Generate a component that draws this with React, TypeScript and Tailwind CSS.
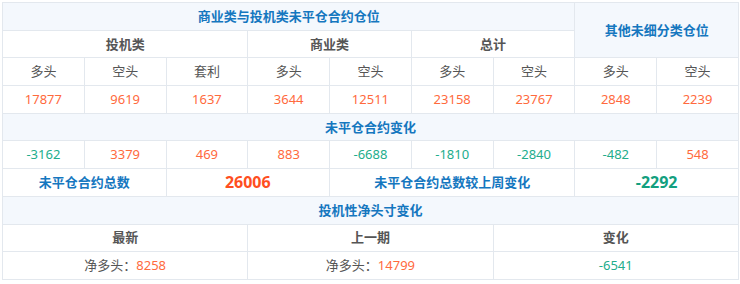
import React from "react";

const B = "border border-[#e3e8ee]";
const head = `${B} bg-[#f4f8fd] text-[#1577bf] font-bold text-[13px]`;
const sub = `${B} text-[#555] font-bold text-[13px]`;
const lab = `${B} text-[#555] text-[13px]`;
const org = `${B} text-[#ff6a3d] text-[13px]`;
const grn = `${B} text-[#22ad8c] text-[13px]`;

export default function App() {
  const cols = Array.from({ length: 9 });
  return (
    <div className="p-[2px] bg-white" style={{ fontFamily: '"Noto Sans", "Noto Sans CJK SC", sans-serif' }}>
      <table className="table-fixed border-collapse w-[736px] text-center leading-none">
        <colgroup>
          {cols.map((_, i) => (
            <col key={i} className="w-[81.78px]" />
          ))}
        </colgroup>
        <tbody>
          <tr className="h-[27.7px]">
            <td colSpan={7} className={head}>商业类与投机类未平仓合约仓位</td>
            <td colSpan={2} rowSpan={2} className={head}>其他未细分类仓位</td>
          </tr>
          <tr className="h-[27.7px]">
            <td colSpan={3} className={sub}>投机类</td>
            <td colSpan={2} className={sub}>商业类</td>
            <td colSpan={2} className={sub}>总计</td>
          </tr>
          <tr className="h-[27.7px]">
            {["多头", "空头", "套利", "多头", "空头", "多头", "空头", "多头", "空头"].map((t, i) => (
              <td key={i} className={lab}>{t}</td>
            ))}
          </tr>
          <tr className="h-[27.7px]">
            {["17877", "9619", "1637", "3644", "12511", "23158", "23767", "2848", "2239"].map((t, i) => (
              <td key={i} className={org}>{t}</td>
            ))}
          </tr>
          <tr className="h-[27.7px]">
            <td colSpan={9} className={head}>未平仓合约变化</td>
          </tr>
          <tr className="h-[27.7px]">
            {["-3162", "3379", "469", "883", "-6688", "-1810", "-2840", "-482", "548"].map((t, i) => (
              <td key={i} className={t.startsWith("-") ? grn : org}>{t}</td>
            ))}
          </tr>
          <tr className="h-[27.7px]">
            <td colSpan={2} className={`${B} text-[#1577bf] font-bold text-[13px]`}>未平仓合约总数</td>
            <td colSpan={2} className={`${B} text-[#ff4f1f] font-bold text-[16px]`}>26006</td>
            <td colSpan={3} className={`${B} text-[#1577bf] font-bold text-[13px]`}>未平仓合约总数较上周变化</td>
            <td colSpan={2} className={`${B} text-[#13a07f] font-bold text-[16px]`}>-2292</td>
          </tr>
          <tr className="h-[27.7px]">
            <td colSpan={9} className={head}>投机性净头寸变化</td>
          </tr>
          <tr className="h-[27.7px]">
            <td colSpan={3} className={sub}>最新</td>
            <td colSpan={3} className={sub}>上一期</td>
            <td colSpan={3} className={sub}>变化</td>
          </tr>
          <tr className="h-[27.7px]">
            <td colSpan={3} className={lab}>
              净多头：<span className="text-[#ff6a3d]">8258</span>
            </td>
            <td colSpan={3} className={lab}>
              净多头：<span className="text-[#ff6a3d]">14799</span>
            </td>
            <td colSpan={3} className={grn}>-6541</td>
          </tr>
        </tbody>
      </table>
    </div>
  );
}
